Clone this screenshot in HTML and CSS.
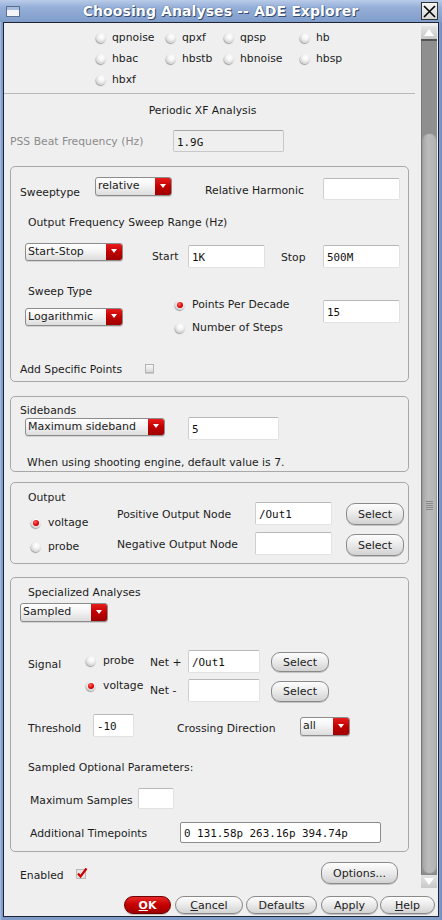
FILE: index.html
```html
<!DOCTYPE html>
<html>
<head>
<meta charset="utf-8">
<title>Choosing Analyses -- ADE Explorer</title>
<link rel="stylesheet" href="styles.css">
</head>
<body>
<div class="window">
  <div class="titlebar">
    <span class="winicon"><span class="winicon-bar"></span></span>
    <span class="title">Choosing Analyses -- ADE Explorer</span>
    <span class="close">
      <svg width="15" height="15" viewBox="0 0 15 15"><path d="M2 2 L13 13 M13 2 L2 13" stroke="#000" stroke-width="1.6" fill="none"/></svg>
    </span>
  </div>
  <div class="client">
    <div class="main">
      <div class="content">
        <div class="radios">
          <label class="titem"><span class="radio"></span>qpnoise</label>
          <label class="titem"><span class="radio"></span>qpxf</label>
          <label class="titem"><span class="radio"></span>qpsp</label>
          <label class="titem"><span class="radio"></span>hb</label>
          <label class="titem"><span class="radio"></span>hbac</label>
          <label class="titem"><span class="radio"></span>hbstb</label>
          <label class="titem"><span class="radio"></span>hbnoise</label>
          <label class="titem"><span class="radio"></span>hbsp</label>
          <label class="titem"><span class="radio"></span>hbxf</label>
        </div>
        <div class="sep"></div>
        <div class="heading">Periodic XF Analysis</div>
        <div class="row pss-row">
          <span class="lbl lbl-pss">PSS Beat Frequency (Hz)</span>
          <span class="input disabled i-pss">1.9G</span>
        </div>

        <div class="group g1">
          <div class="row rowA">
            <span class="lbl lbl-sweeptype">Sweeptype</span>
            <span class="combo c-relative"><span class="combo-text">relative</span><span class="combo-btn"></span></span>
            <span class="lbl lbl-relharm">Relative Harmonic</span>
            <span class="input i-relharm"></span>
          </div>
          <div class="lbl lbl-ofsr">Output Frequency Sweep Range (Hz)</div>
          <div class="row rowC">
            <span class="combo c-startstop"><span class="combo-text">Start-Stop</span><span class="combo-btn"></span></span>
            <span class="lbl lbl-start">Start</span>
            <span class="input i-start">1K</span>
            <span class="lbl lbl-stop">Stop</span>
            <span class="input i-stop">500M</span>
          </div>
          <div class="lbl lbl-sweeptype2">Sweep Type</div>
          <div class="row rowE">
            <span class="combo c-log"><span class="combo-text">Logarithmic</span><span class="combo-btn"></span></span>
            <div class="radiocol">
              <label class="ritem"><span class="radio on"></span>Points Per Decade</label>
              <label class="ritem"><span class="radio"></span>Number of Steps</label>
            </div>
            <span class="input i-ppd">15</span>
          </div>
          <div class="row rowF">
            <span class="lbl lbl-asp">Add Specific Points</span>
            <span class="checkbox"></span>
          </div>
        </div>

        <div class="group g2">
          <div class="lbl lbl-sidebands">Sidebands</div>
          <div class="row rowSB">
            <span class="combo c-maxsb"><span class="combo-text">Maximum sideband</span><span class="combo-btn"></span></span>
            <span class="input i-sb">5</span>
          </div>
          <div class="lbl lbl-note">When using shooting engine, default value is 7.</div>
        </div>

        <div class="group g3">
          <div class="row rowOut">
            <div class="colL">
              <div class="lbl">Output</div>
              <label class="ritem r-voltage"><span class="radio on"></span>voltage</label>
              <label class="ritem r-probe"><span class="radio"></span>probe</label>
            </div>
            <div class="colM">
              <div class="lbl lbl-pos">Positive Output Node</div>
              <div class="lbl lbl-neg">Negative Output Node</div>
            </div>
            <div class="colI">
              <span class="input i-pos">/Out1</span>
              <span class="input i-neg"></span>
            </div>
            <div class="colB">
              <span class="btn b-sel1">Select</span>
              <span class="btn b-sel2">Select</span>
            </div>
          </div>
        </div>

        <div class="group g4">
          <div class="lbl lbl-spec">Specialized Analyses</div>
          <span class="combo c-sampled"><span class="combo-text">Sampled</span><span class="combo-btn"></span></span>
          <div class="row rowSig">
            <div class="colSig"><span class="lbl lbl-signal">Signal</span></div>
            <div class="colR">
              <label class="ritem r-sprobe"><span class="radio"></span>probe</label>
              <label class="ritem r-svolt"><span class="radio on"></span>voltage</label>
            </div>
            <div class="colN">
              <div class="lbl lbl-netp">Net +</div>
              <div class="lbl lbl-netm">Net -</div>
            </div>
            <div class="colI2">
              <span class="input i-netp">/Out1</span>
              <span class="input i-netm"></span>
            </div>
            <div class="colB2">
              <span class="btn b-sel3">Select</span>
              <span class="btn b-sel4">Select</span>
            </div>
          </div>
          <div class="row rowThr">
            <span class="lbl lbl-thr">Threshold</span>
            <span class="input i-thr">-10</span>
            <span class="lbl lbl-cd">Crossing Direction</span>
            <span class="combo c-all"><span class="combo-text">all</span><span class="combo-btn"></span></span>
          </div>
          <div class="lbl lbl-sop">Sampled Optional Parameters:</div>
          <div class="row rowMS">
            <span class="lbl lbl-ms">Maximum Samples</span>
            <span class="input i-ms"></span>
          </div>
          <div class="row rowAT">
            <span class="lbl lbl-at">Additional Timepoints</span>
            <span class="input i-at">0 131.58p 263.16p 394.74p</span>
          </div>
        </div>

        <div class="row rowEn">
          <span class="lbl lbl-en">Enabled</span>
          <span class="check-en">
            <svg width="12" height="12" viewBox="0 0 12 12"><rect x="0.5" y="2.5" width="9" height="9" fill="#e6e6e6" stroke="#b8b8b8"/><path d="M2 6.5 L4.5 9.5 L10.5 1.5" stroke="#d10000" stroke-width="2.2" fill="none"/></svg>
          </span>
          <span class="btn b-options">Options...</span>
        </div>
      </div>

      <div class="scrollbar">
        <div class="sb-arrow sb-up"><svg width="10" height="7" viewBox="0 0 10 7"><path d="M0 7 L5 0 L10 7 Z" fill="#fff"/></svg></div>
        <div class="sb-track"></div>
        <div class="sb-thumb"><span class="grip"></span></div>
        <div class="sb-arrow sb-down"><svg width="10" height="7" viewBox="0 0 10 7"><path d="M0 0 L5 7 L10 0 Z" fill="#fff"/></svg></div>
      </div>
    </div>
    <div class="buttonbar">
      <span class="btn b-ok"><u>O</u>K</span>
      <span class="btn b-cancel"><u>C</u>ancel</span>
      <span class="btn b-defaults">Defaults</span>
      <span class="btn b-apply">Apply</span>
      <span class="btn b-help"><u>H</u>elp</span>
    </div>
  </div>
</div>
</body>
</html>
```

FILE: styles.css
```css
html, body {
  margin: 0;
  padding: 0;
  background: #7f9bc8;
}
body {
  font-family: "DejaVu Sans", sans-serif;
  font-size: 10.8px;
  color: #1c1c1c;
}
.window {
  width: 442px;
  height: 920px;
  box-sizing: border-box;
  padding: 0 3px 3px 3px;
  background: linear-gradient(to right, #a9bfe2, #7f9bc8 2px, #7f9bc8 440px, #6b88b8);
  display: flex;
  flex-direction: column;
}
.titlebar {
  height: 22px;
  margin: 0 -3px;
  display: flex;
  align-items: center;
  background: linear-gradient(to bottom, #b9cbe8 0%, #94aed7 35%, #809dca 100%);
}
.winicon {
  width: 14px;
  height: 11px;
  margin-left: 6px;
  margin-top: 1px;
  border: 1px solid #5c6f8f;
  background: #f2f4f8;
  box-sizing: border-box;
  display: flex;
  flex-direction: column;
}
.winicon-bar {
  height: 3px;
  background: #a8bce0;
}
.title {
  flex: 1;
  text-align: center;
  font-family: "DejaVu Sans", sans-serif;
  font-weight: bold;
  font-size: 14px;
  color: #fff;
  text-shadow: 1px 1px 0 #3b4d6e, 0 0 1px #3b4d6e;
  letter-spacing: 0.1px;
}
.close {
  width: 17px;
  height: 18px;
  margin-right: 4px;
  box-sizing: border-box;
  border: 1px solid #333;
  background: linear-gradient(#f6f6f6, #d6d6d6);
  display: flex;
  align-items: center;
  justify-content: center;
}
.client {
  flex: 1;
  border: 1px solid #1e2433;
  background: #efefef;
  display: flex;
  flex-direction: column;
}
.main {
  height: 870px;
  display: flex;
}
.content {
  width: 417px;
  flex: none;
}
.row {
  display: flex;
  align-items: flex-start;
}
.lbl {
  line-height: 15px;
  white-space: nowrap;
  flex: none;
}

/* top radios */
.radios {
  padding: 4px 0 0 92px;
  display: grid;
  grid-template-columns: 70px 58px 76px auto;
  grid-auto-rows: 21px;
}
.titem {
  display: flex;
  align-items: center;
  gap: 6px;
  line-height: 14px;
}
.radio {
  width: 10px;
  height: 10px;
  border-radius: 50%;
  flex: none;
  position: relative;
  background: radial-gradient(circle at 55% 35%, #ffffff 0%, #f4f4f4 35%, #d0d0d0 75%, #9a9a9a 100%);
  box-shadow: -0.5px 1px 1px rgba(0,0,0,0.35);
}
.radio.on::after {
  content: "";
  position: absolute;
  left: 2px;
  top: 2px;
  width: 6px;
  height: 6px;
  border-radius: 50%;
  background: radial-gradient(circle at 40% 35%, #ff6a6a 0%, #e00000 55%, #9c0000 100%);
}
.sep {
  margin-top: 3px;
  height: 1px;
  width: 411px;
  background: #b8b8b8;
}
.heading {
  margin-top: 10px;
  width: 397px;
  text-align: center;
  line-height: 14px;
  height: 14px;
}
.pss-row {
  margin-top: 12px;
  height: 22px;
}
.lbl-pss {
  margin-left: 6px;
  margin-top: 4px;
  width: 163px;
  color: #8c8c8c;
}
.input {
  box-sizing: border-box;
  flex: none;
  display: flex;
  align-items: center;
  padding: 2px 0 0 3px;
  background: #fff;
  border: 1px solid #e2e2e2;
  border-top-color: #b8b8b8;
  border-left-color: #cfcfcf;
  border-radius: 2px;
  font-family: "DejaVu Sans Mono", monospace;
  font-size: 10.9px;
  color: #111;
  white-space: nowrap;
}
.input.disabled {
  background: #efefef;
  border-color: #c8c8c8;
  border-top-color: #a8a8a8;
}
.i-pss { width: 111px; height: 22px; }

/* groups */
.group {
  box-sizing: border-box;
  margin-left: 6px;
  width: 399px;
  border: 1px solid #a8a8a8;
  border-radius: 5px;
}
.g1 { margin-top: 14px; height: 216px; padding-top: 8px; }
.g2 { margin-top: 14px; height: 76px; }
.g3 { margin-top: 10px; height: 82px; }
.g4 { margin-top: 13px; height: 275px; }

/* combos */
.combo {
  box-sizing: border-box;
  display: flex;
  flex: none;
  border: 1px solid #8c8c8c;
  border-radius: 3px;
  overflow: hidden;
  background: linear-gradient(#ffffff, #f4f4f4 45%, #dcdcdc);
  box-shadow: 0 1px 0 rgba(0,0,0,0.12);
}
.combo-text {
  flex: 1;
  padding-left: 2px;
  font-size: 11px;
  line-height: 15px;
  white-space: nowrap;
  overflow: hidden;
}
.combo-btn {
  width: 16px;
  flex: none;
  position: relative;
  background: linear-gradient(#e81c1c, #c00000 50%, #9e0000);
}
.combo-btn::after {
  content: "";
  position: absolute;
  left: 5px;
  top: 50%;
  margin-top: -3px;
  border-left: 3.5px solid transparent;
  border-right: 3.5px solid transparent;
  border-top: 4px solid #fff;
}

/* group 1 */
.rowA { height: 27px; }
.lbl-sweeptype { margin-left: 9px; margin-top: 10px; width: 75px; }
.c-relative { margin-top: 2px; width: 77px; height: 19px; }
.lbl-relharm { margin-left: 33px; margin-top: 8px; width: 118px; }
.i-relharm { margin-top: 3px; width: 77px; height: 22px; }
.lbl-ofsr { margin-top: 13px; margin-left: 17px; height: 14px; }
.rowC { margin-top: 14px; height: 25px; }
.c-startstop { margin-left: 14px; width: 98px; height: 18px; }
.lbl-start { margin-left: 29px; margin-top: 6px; width: 36px; }
.i-start { margin-top: 2px; width: 77px; height: 23px; }
.lbl-stop { margin-left: 16px; margin-top: 7px; width: 42px; }
.i-stop { margin-top: 2px; width: 77px; height: 23px; }
.lbl-sweeptype2 { margin-top: 18px; margin-left: 17px; line-height: 12px; height: 12px; }
.rowE { height: 37px; }
.c-log { margin-left: 14px; margin-top: 10px; width: 98px; height: 18px; }
.radiocol {
  margin-left: 52px;
  width: 148px;
  display: flex;
  flex-direction: column;
  gap: 9px;
  flex: none;
}
.ritem {
  display: flex;
  align-items: center;
  gap: 7px;
  height: 14px;
  line-height: 14px;
  white-space: nowrap;
}
.i-ppd { margin-top: 2px; width: 77px; height: 23px; }
.rowF { margin-top: 27px; height: 14px; }
.lbl-asp { margin-left: 9px; width: 125px; }
.checkbox {
  margin-top: 2px;
  width: 9px;
  height: 9px;
  box-sizing: border-box;
  border: 1px solid #b4b4b4;
  background: linear-gradient(#f8f8f8, #dadada);
  box-shadow: 0 1px 0 rgba(0,0,0,0.15);
}

/* group 2 */
.lbl-sidebands { margin-top: 7px; margin-left: 9px; line-height: 13px; height: 13px; }
.c-maxsb { margin-left: 14px; margin-top: 1px; width: 140px; height: 18px; }
.i-sb { margin-left: 23px; width: 91px; height: 23px; }
.lbl-note { margin-top: 15px; margin-left: 16px; }

/* group 3 */
.rowOut { padding-top: 8px; }
.colL { margin-left: 17px; width: 89px; flex: none; }
.colL .lbl { height: 14px; line-height: 14px; }
.r-voltage { margin-left: 3px; margin-top: 11px; }
.r-probe { margin-left: 3px; margin-top: 10px; }
.colM { width: 138px; flex: none; }
.colM .lbl { height: 14px; }
.lbl-pos { margin-top: 16px; }
.lbl-neg { margin-top: 16px; }
.colI { width: 77px; flex: none; display: flex; flex-direction: column; }
.i-pos { margin-top: 11px; width: 77px; height: 23px; }
.i-neg { margin-top: 7px; width: 77px; height: 23px; }
.colB { margin-left: 14px; width: 58px; flex: none; display: flex; flex-direction: column; }

.btn {
  box-sizing: border-box;
  display: flex;
  align-items: center;
  justify-content: center;
  flex: none;
  border: 1px solid #8a8a8a;
  border-radius: 9px;
  background: linear-gradient(#fdfdfd, #ececec 45%, #d2d2d2);
  box-shadow: 0 1px 0 rgba(0,0,0,0.18);
  font-size: 11px;
  color: #222;
  white-space: nowrap;
}
.b-sel1 { margin-top: 12px; height: 22px; }
.b-sel2 { margin-top: 9px; height: 22px; }

/* group 4 */
.lbl-spec { margin-top: 7px; margin-left: 17px; height: 14px; }
.c-sampled { margin-top: 4px; margin-left: 9px; width: 88px; height: 19px; }
.rowSig { margin-top: 28px; }
.colSig { margin-left: 17px; width: 58px; flex: none; }
.lbl-signal { display: block; margin-top: 7px; }
.colR { width: 64px; flex: none; }
.r-sprobe { margin-top: 4px; }
.r-svolt { margin-top: 11px; }
.colN { width: 38px; flex: none; }
.colN .lbl { height: 14px; }
.lbl-netp { margin-top: 5px; }
.lbl-netm { margin-top: 14px; }
.colI2 { width: 72px; flex: none; display: flex; flex-direction: column; }
.i-netp { width: 72px; height: 23px; }
.i-netm { margin-top: 6px; width: 72px; height: 23px; }
.colB2 { margin-left: 11px; width: 58px; flex: none; display: flex; flex-direction: column; }
.b-sel3 { margin-top: 2px; height: 20px; }
.b-sel4 { margin-top: 9px; height: 21px; }
.rowThr { margin-top: 12px; }
.lbl-thr { margin-left: 17px; margin-top: 7px; width: 65px; }
.i-thr { width: 41px; height: 23px; }
.lbl-cd { margin-left: 43px; margin-top: 7px; width: 123px; }
.c-all { margin-top: 3px; width: 50px; height: 19px; }
.lbl-sop { margin-top: 23px; margin-left: 17px; height: 14px; }
.rowMS { margin-top: 14px; }
.lbl-ms { margin-left: 19px; margin-top: 5px; width: 108px; }
.i-ms { width: 36px; height: 21px; }
.rowAT { margin-top: 13px; }
.lbl-at { margin-left: 19px; margin-top: 4px; width: 150px; }
.i-at { width: 201px; height: 21px; border-color: #8c8c8c; }

/* enabled row */
.rowEn { margin-top: 10px; }
.lbl-en { margin-left: 16px; margin-top: 6px; width: 56px; }
.check-en { margin-top: 5px; width: 12px; height: 12px; flex: none; display: block; }
.check-en svg { display: block; }
.b-options { margin-left: 233px; width: 77px; height: 22px; }

/* scrollbar */
.scrollbar {
  width: 16px;
  flex: none;
  margin-top: 3px;
  display: flex;
  flex-direction: column;
}
.sb-arrow {
  height: 15px;
  flex: none;
  box-sizing: border-box;
  background: linear-gradient(#e4e4e4, #c8c8c8);
  display: flex;
  align-items: center;
  justify-content: center;
}
.sb-up { border-bottom: 2px solid #555; }
.sb-down { border-top: 1px solid #888; height: 14px; }
.sb-track {
  height: 92px;
  background: #8f8f8f;
  border-left: 1px solid #7a7a7a;
}
.sb-thumb {
  height: 741px;
  box-sizing: border-box;
  background: #8f8f8f;
  position: relative;
  border-left: 1px solid #7a7a7a;
}
.sb-thumb::before {
  content: "";
  position: absolute;
  left: 0;
  right: 0;
  top: 0;
  bottom: 0;
  border-radius: 8px;
  background: linear-gradient(to right, #a8a8a8, #bcbcbc 40%, #b2b2b2);
  border: 1px solid #9a9a9a;
}
.grip {
  position: absolute;
  left: 4px;
  top: 368px;
  width: 7px;
  height: 9px;
  background: repeating-linear-gradient(to bottom, #8a8a8a 0, #8a8a8a 1px, transparent 1px, transparent 2px);
}

/* bottom buttons */
.buttonbar {
  height: 23px;
  display: flex;
  justify-content: flex-end;
  align-items: flex-start;
  padding: 3px 3px 0 0;
  box-sizing: border-box;
}
.buttonbar .btn { height: 18px; font-size: 11px; }
.b-ok {
  width: 47px;
  background: linear-gradient(#e82828, #c40000 50%, #a00000);
  border-color: #700000;
  color: #fff;
  font-weight: bold;
}
.b-cancel { width: 68px; margin-left: 4px; }
.b-defaults { width: 71px; margin-left: 3px; }
.b-apply { width: 57px; margin-left: 4px; }
.b-help { width: 55px; margin-left: 2px; }
```
